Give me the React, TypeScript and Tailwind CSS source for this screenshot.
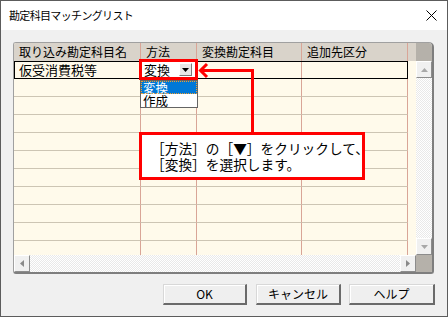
import React from "react";

const jp = "font-['Noto_Sans_CJK_JP','Noto_Sans_CJK_SC',sans-serif]";

const headers = [
  { label: "取り込み勘定科目名", w: "w-[127px]" },
  { label: "方法", w: "w-[56px]" },
  { label: "変換勘定科目", w: "w-[105px]" },
  { label: "追加先区分", w: "w-[106px]" },
];

const Tri = ({ dir, color = "#9a9a9a" }: { dir: "up" | "down" | "left" | "right"; color?: string }) => {
  const pts = {
    up: "0,4 7,4 3.5,0",
    down: "0,0 7,0 3.5,4",
    left: "4,0 4,7 0,3.5",
    right: "0,0 0,7 4,3.5",
  }[dir];
  const vertical = dir === "up" || dir === "down";
  return (
    <svg width={vertical ? 7 : 4} height={vertical ? 4 : 7}>
      <polygon points={pts} fill={color} />
    </svg>
  );
};

const ScrollBtn = ({ dir }: { dir: "up" | "down" | "left" | "right" }) => (
  <div className="w-[16px] h-[17px] shrink-0 flex items-center justify-center bg-[#f0f0f0] border border-t-white border-l-white border-r-[#8c8c8c] border-b-[#8c8c8c]">
    <Tri dir={dir} color={dir === "left" || dir === "right" ? "#8a8a8a" : "#a8a8a8"} />
  </div>
);

const track =
  "bg-[#f4f4f4] bg-[image:repeating-conic-gradient(#ffffff_0%_25%,#e9e9e9_0%_50%)] bg-[length:2px_2px]";

const Row = ({ first }: { first?: boolean }) => (
  <div className="flex h-[18px] shrink-0">
    <div className={"flex " + (first ? "outline outline-1 outline-black -outline-offset-1" : "")}>
      <div className="w-[127px] h-[18px] border-r border-r-[#d9a597] border-b border-b-[#cdc5b4] pl-[5px] text-[13px] leading-[17px]">
        {first ? "仮受消費税等" : ""}
      </div>
      <div className={"w-[56px] h-[18px] border-r border-r-[#d9a597] border-b border-b-[#cdc5b4] flex items-center " + (first ? "bg-white pl-[3px]" : "")}>
        {first && (
          <>
            <span className="text-[13px] leading-[17px]">変換</span>
            <div className="ml-auto mr-[4px] w-[13px] h-[13px] bg-[#e8e8e8] border border-t-white border-l-white border-r-[#7a7a7a] border-b-[#7a7a7a] flex items-center justify-center">
              <Tri dir="down" color="#000" />
            </div>
          </>
        )}
      </div>
      <div className="w-[105px] h-[18px] border-r border-r-[#d9a597] border-b border-b-[#cdc5b4]" />
      <div className="w-[106px] h-[18px] border-r border-r-[#d9a597] border-b border-b-[#cdc5b4]" />
    </div>
    <div className="flex-1" />
  </div>
);

export default function App() {
  return (
    <div className={"relative w-[448px] h-[317px] border border-[#5c5c5c] flex flex-col text-black " + jp}>
      {/* title bar */}
      <div className="h-[29px] bg-white flex items-center justify-between pl-[8px] pr-[10px] shrink-0">
        <span className="text-[11px] tracking-[-0.06em] leading-none">勘定科目マッチングリスト</span>
        <svg width="11" height="11" viewBox="0 0 11 11">
          <path d="M0.5 0.5L10.5 10.5M10.5 0.5L0.5 10.5" stroke="#000" strokeWidth="1" />
        </svg>
      </div>

      <div className="flex-1 bg-[#f0f0f0] flex flex-col pl-[12px] pt-[12px]">
        {/* list panel */}
        <div className="w-[421px] h-[232px] flex flex-col border-l border-t border-[#a0a0a0] border-r-2 border-b-2 border-r-[#7e7e7e] border-b-[#7e7e7e] rounded-[3px] rounded-tr-[5px] overflow-hidden">
          <div className="flex h-[212px]">
            <div className="w-[402px] flex flex-col bg-[#fffaeb] overflow-hidden">
              <div className="flex h-[18px] shrink-0 bg-[#d9d3ca]">
                {headers.map((h) => (
                  <div key={h.label} className={h.w + " h-[18px] border-r border-r-[#d9a597] pl-[5px] text-[12px] leading-[18px]"}>
                    {h.label}
                  </div>
                ))}
              </div>
              <Row first />
              {Array.from({ length: 10 }).map((_, i) => (
                <Row key={i} />
              ))}
            </div>
            <div className="w-[16px] flex flex-col">
              <div className="h-[18px] bg-[#b5b1aa] shrink-0" />
              <ScrollBtn dir="up" />
              <div className={"flex-1 " + track} />
              <ScrollBtn dir="down" />
            </div>
          </div>
          <div className="flex h-[17px]">
            <ScrollBtn dir="left" />
            <div className={"flex-1 " + track} />
            <ScrollBtn dir="right" />
            <div className="w-[16px] bg-[#b5b1aa]" />
          </div>
        </div>

        {/* buttons */}
        <div className="flex mt-[10px] ml-[150px]">
          {[
            { t: "OK", w: "w-[84px]", m: "" },
            { t: "キャンセル", w: "w-[85px]", m: "ml-[9px]" },
            { t: "ヘルプ", w: "w-[86px]", m: "ml-[8px]" },
          ].map((b) => (
            <div
              key={b.t}
              className={b.w + " " + b.m + " h-[21px] flex items-center justify-center bg-[#efefef] border border-t-[#d8d8d8] border-l-[#d8d8d8] border-r-2 border-b-2 border-r-[#6a6a6a] border-b-[#6a6a6a] shadow-[inset_1px_1px_0_#ffffff] text-[12px] leading-none"}
            >
              {b.t}
            </div>
          ))}
        </div>
      </div>

      {/* dropdown list */}
      <div className="absolute left-[139px] top-[79px] w-[58px] h-[28px] bg-white border border-[#646464] flex flex-col text-[12.5px] leading-[13px]">
        <div className="h-[13px] bg-[#0078d7] text-white pl-[2px] outline outline-1 outline-dotted outline-[#f0a030] -outline-offset-1">変換</div>
        <div className="h-[13px] pl-[2px]">作成</div>
      </div>

      {/* red highlight on combo */}
      <div className="absolute left-[138px] top-[58px] w-[59px] h-[21px] border-[3px] border-[#ff0000]" />

      {/* arrow */}
      <svg className="absolute left-0 top-0" width="448" height="317">
        <path d="M200 69.5 H253 M251.5 69.5 V132" stroke="#ff0000" strokeWidth="3" fill="none" />
        <path d="M206 63 L199.5 69.5 L206 76" stroke="#ff0000" strokeWidth="3" fill="none" />
      </svg>

      {/* callout */}
      <div className="absolute left-[138px] top-[131px] w-[226px] h-[48px] bg-white border-[3px] border-[#ff0000] pl-[9px] pt-[5px] text-[13.7px] leading-[16px] whitespace-nowrap">
        <div>［方法］の［▼］をクリックして、</div>
        <div>［変換］を選択します。</div>
      </div>
    </div>
  );
}
